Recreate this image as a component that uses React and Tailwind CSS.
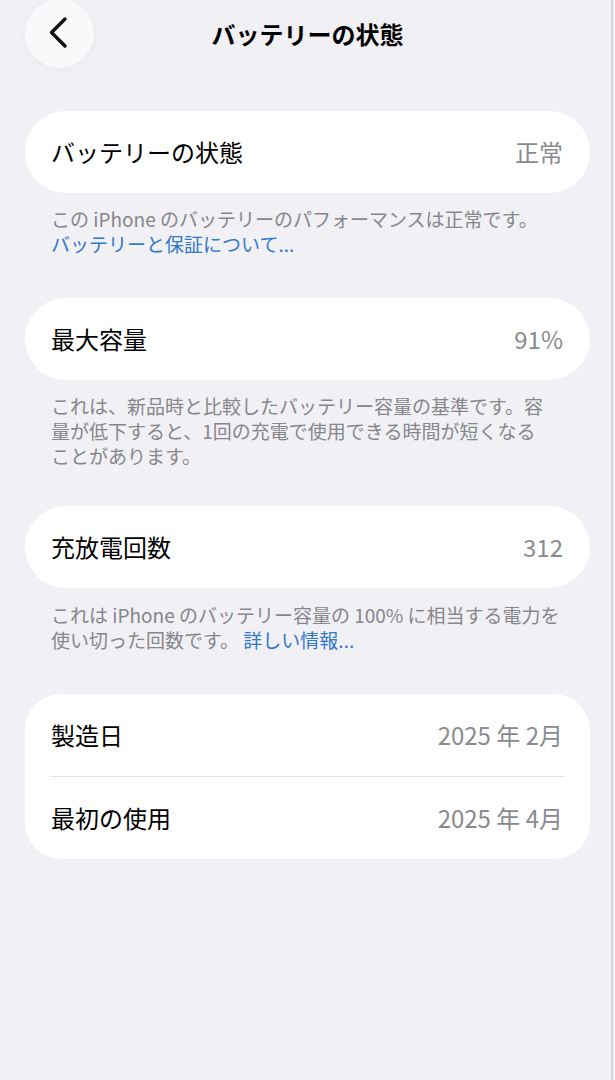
import React from 'react';

const font = "font-['Noto_Sans_CJK_JP','Noto_Sans',sans-serif]";

const Row = ({ label, value }) => (
  <div className="flex h-[82px] items-center justify-between pl-[26px] pr-[27px]">
    <span className="text-[24px] leading-none text-black">{label}</span>
    <span className="text-[24px] leading-none text-[#8a8a8e]">{value}</span>
  </div>
);

const Note = ({ children, className = '' }) => (
  <p className={`whitespace-nowrap pl-[26px] text-[19px] leading-[25px] text-[#86868b] ${className}`}>
    {children}
  </p>
);

const Link = ({ children }) => <span className="text-[#3178c9]">{children}</span>;

export default function App() {
  return (
    <div className={`flex min-h-[1080px] w-[615px] bg-[#f0f0f5] ${font}`}>
      <div className="flex-1 pl-[25px] pr-[21px]">
        {/* header */}
        <div className="grid grid-cols-[69px_1fr_69px] items-center">
          <button className="-mt-px flex h-[69px] w-[69px] items-center justify-center rounded-full bg-[#f9f9fb] shadow-[0_2px_10px_rgba(0,0,0,0.04)]">
            <svg width="69" height="69" viewBox="0 0 69 69" fill="none">
              <path
                d="M40 20 L26.5 33.5 L40 47"
                stroke="#111"
                strokeWidth="3.4"
                strokeLinecap="round"
                strokeLinejoin="round"
              />
            </svg>
          </button>
          <h1 className="text-center text-[24px] font-bold leading-none text-black">バッテリーの状態</h1>
          <div />
        </div>

        {/* battery state */}
        <div className="mt-[43px] rounded-full bg-white">
          <Row label="バッテリーの状態" value="正常" />
        </div>
        <Note className="mt-[13px]">
          この iPhone のバッテリーのパフォーマンスは正常です。
          <br />
          <Link>バッテリーと保証について...</Link>
        </Note>

        {/* max capacity */}
        <div className="mt-[42px] rounded-full bg-white">
          <Row label="最大容量" value="91%" />
        </div>
        <Note className="mt-[13px]">
          これは、新品時と比較したバッテリー容量の基準です。容
          <br />
          量が低下すると、1回の充電で使用できる時間が短くなる
          <br />
          ことがあります。
        </Note>

        {/* cycle count */}
        <div className="mt-[38px] rounded-full bg-white">
          <Row label="充放電回数" value="312" />
        </div>
        <Note className="mt-[14px]">
          これは iPhone のバッテリー容量の 100% に相当する電力を
          <br />
          使い切った回数です。 <Link>詳しい情報...</Link>
        </Note>

        {/* dates */}
        <div className="mt-[42px] rounded-[36px] bg-white">
          <Row label="製造日" value="2025 年 2月" />
          <div className="mx-[25px] h-px bg-[#e3e3e8]" />
          <Row label="最初の使用" value="2025 年 4月" />
        </div>
      </div>
      <div className="w-[2px] bg-[#d4d4d9]" />
      <div className="w-[2px]" />
    </div>
  );
}
